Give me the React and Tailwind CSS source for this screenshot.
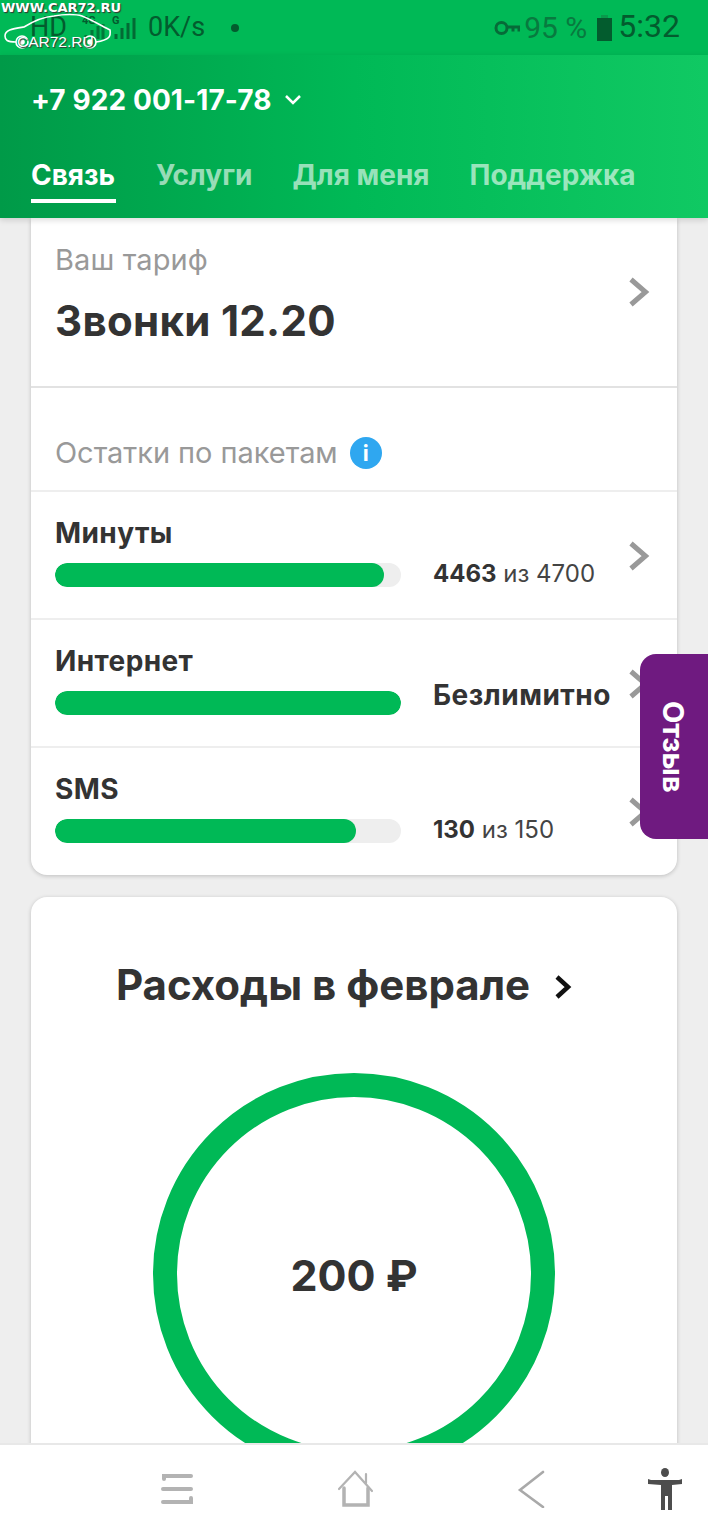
import React from "react";

function Chevron({ className }) {
  return (
    <svg className={className} width="24" height="32" viewBox="0 0 24 32" fill="none">
      <path d="M4 3.5 L18.5 16 L4 28.5" stroke="#999999" strokeWidth="5" />
    </svg>
  );
}

function PackageRow({ title, fill, value, rest, big }) {
  return (
    <div className="relative h-[128px] border-t-2 border-[#eeeeee] pl-6 pr-6 pt-[23px]">
      <div className="text-[28px] leading-[36px] tracking-[0.4px] font-bold text-[#333333]">{title}</div>
      <div className="flex items-start mt-[12px]">
        <div className="w-[346px] h-6 rounded-full bg-[#eeeeee] overflow-hidden">
          <div className={`h-6 rounded-full bg-[#00b956] ${fill}`} />
        </div>
        {big ? (
          <div className="ml-8 -mt-[14px] text-[28px] leading-[36px] tracking-[0.5px] font-bold text-[#333333]">{value}</div>
        ) : (
          <div className="ml-8 text-[24px] leading-[24px] -mt-[1px] text-[#333333]">
            <span className="font-bold">{value}</span> <span className="text-[#444444]">{rest}</span>
          </div>
        )}
      </div>
      <Chevron className="absolute left-[596px] top-[48px]" />
    </div>
  );
}

export default function App() {
  return (
    <div className="relative w-[708px] h-[1536px] overflow-hidden flex flex-col bg-[#eeeeee] font-['Inter','Liberation_Sans',sans-serif]">
      {/* status bar */}
      <div className="h-[55px] shrink-0 bg-[#00b956] flex items-center justify-between pl-[30px] pr-[28px] text-[#035c2e] font-['Roboto',sans-serif]">
        <div className="flex items-center text-[27px]">
          <span className="w-[48px]">HD</span>
          <svg width="70" height="40" viewBox="0 0 70 40" fill="none" stroke="#035c2e" strokeWidth="3">
            <path d="M8 31v-4M14 31v-9M20 31v-13M25 31v-15" opacity="0.7" />
            <path d="M38 31v-5M44 31v-11M50 31v-16M56 31v-21" opacity="0.85" />
            <text x="4" y="16" fontSize="11" fontWeight="700" fill="#035c2e" stroke="none">4G</text>
            <text x="34" y="16" fontSize="11" fontWeight="700" fill="#035c2e" stroke="none">G</text>
          </svg>
          <span>0K/s</span>
          <span className="ml-[26px] w-2 h-2 rounded-full bg-[#035c2e]" />
        </div>
        <div className="flex items-center">
          <svg width="26" height="16" viewBox="0 0 26 16" fill="none" stroke="#066b38" strokeWidth="3">
            <circle cx="7.5" cy="8" r="5.5" />
            <path d="M13 7h12v4.5M19 7v4.5" />
          </svg>
          <span className="ml-[4px] text-[30px] text-[#087a3f]">95 %</span>
          <svg className="ml-[10px]" width="15" height="26" viewBox="0 0 15 26">
            <rect x="4" y="0" width="7" height="3" fill="#0a9a4c" />
            <rect x="0" y="3" width="15" height="23" fill="#035c2e" />
          </svg>
          <span className="ml-[6px] -mt-[3px] text-[32px]">5:32</span>
        </div>
      </div>

      {/* header */}
      <div className="h-[163px] shrink-0 relative z-10 bg-gradient-to-r from-[#009a48] via-[#00b956] to-[#10c963] shadow-[0_2px_6px_rgba(0,0,0,0.15)] pl-[31px] pt-[25px]">
        <div className="flex items-center text-white text-[28px] leading-[40px] tracking-[0.1px] font-bold">
          +7 922 001-17-78
          <svg className="ml-3" width="18" height="12" viewBox="0 0 18 12" fill="none" stroke="white" strokeWidth="2.5">
            <path d="M2 2l7 7 7-7" />
          </svg>
        </div>
        <div className="flex mt-[35px] text-[28px] leading-[40px] font-bold gap-[40px]">
          <div className="text-white border-b-4 border-white h-[48px] w-[85px]">Связь</div>
          <div className="text-white/60">Услуги</div>
          <div className="text-white/60">Для меня</div>
          <div className="text-white/60">Поддержка</div>
        </div>
      </div>

      {/* content */}
      <div className="flex-1 min-h-0 overflow-hidden px-[31px]">
        <div className="w-[646px] h-[657px] bg-white rounded-b-2xl shadow-[0_1px_4px_rgba(0,0,0,0.2)]">
          <div className="relative h-[170px] border-b-2 border-[#e2e2e2] pl-6 pt-[24px]">
            <div className="text-[29px] leading-[36px] tracking-[0.1px] text-[#999999]">Ваш тариф</div>
            <div className="mt-[16px] text-[42px] leading-[54px] tracking-[0.3px] font-bold text-[#333333]">Звонки 12.20</div>
            <Chevron className="absolute left-[596px] top-[58px]" />
          </div>
          <div className="h-[102px] flex items-center pl-6 pt-[28px] text-[29px] tracking-[-0.05px] text-[#999999]">
            Остатки по пакетам
            <span className="ml-3 w-8 h-8 rounded-full bg-[#2fa7f0] flex items-center justify-center text-white text-[22px] font-bold">i</span>
          </div>
          <PackageRow title="Минуты" fill="w-[329px]" value="4463" rest="из 4700" />
          <PackageRow title="Интернет" fill="w-full" value="Безлимитно" big />
          <PackageRow title="SMS" fill="w-[301px]" value="130" rest="из 150" />
        </div>

        <div className="mt-[22px] w-[646px] h-[700px] bg-white rounded-2xl shadow-[0_1px_4px_rgba(0,0,0,0.2)] pt-[60px]">
          <div className="flex items-center justify-center pr-[20px] text-[42px] leading-[56px] font-bold text-[#333333]">
            Расходы в феврале
            <svg className="ml-[24px] mt-1" width="18" height="26" viewBox="0 0 18 26" fill="none" stroke="#111111" strokeWidth="4.5">
              <path d="M3 3l11 10L3 23" />
            </svg>
          </div>
          <div className="mt-[60px] mx-auto w-[402px] h-[402px] rounded-full border-[24px] border-[#00b956] flex items-center justify-center pt-[3px] text-[43px] font-bold text-[#333333]">
            200 ₽
          </div>
        </div>
      </div>

      {/* bottom nav */}
      <div className="h-[93px] shrink-0 relative z-10 bg-white border-t-2 border-[#e8e8e8] flex items-center pb-[3px]">
        <svg className="ml-[160px]" width="34" height="34" viewBox="0 0 34 34" fill="none" stroke="#b3b3b3" strokeWidth="4" strokeLinecap="round">
          <path d="M4 7V4h27M3 17h28M3 30h28v-4" />
        </svg>
        <svg className="ml-[143px]" width="38" height="38" viewBox="0 0 38 38" fill="none" stroke="#b3b3b3" strokeWidth="3" strokeLinecap="round">
          <path d="M2 19L18 2l17 19M29 4v9" strokeWidth="2.2" />
          <path d="M7 18v17h24V18" strokeWidth="3.5" />
        </svg>
        <svg className="ml-[142px]" width="30" height="38" viewBox="0 0 30 38" fill="none" stroke="#a9a9a9" strokeWidth="2.6" strokeLinecap="round">
          <path d="M26 2L3 20l23 17" />
        </svg>
        <svg className="ml-[100px]" width="38" height="42" viewBox="0 0 38 42" fill="#4d4d4d">
          <ellipse cx="18" cy="4.5" rx="4" ry="4.5" />
          <path d="M1 11l3 1h28l3-1v5l-10 1v25h-4V28h-3v14h-4V17L1 16z" />
        </svg>
      </div>

      {/* feedback tab */}
      <div className="absolute z-20 left-[640px] top-[654px] w-[68px] h-[185px] rounded-l-2xl bg-[#6f1a80] flex items-center justify-center pr-[2px]">
        <span className="[writing-mode:vertical-rl] text-white text-[29px] leading-[34px] font-bold">Отзыв</span>
      </div>

      {/* watermark */}
      <div className="absolute z-30 left-0 top-0 w-[130px] h-[54px]">
        <div className="absolute left-[1px] top-[1px] font-['DejaVu_Sans',sans-serif] text-[13px] leading-[14px] font-bold text-white whitespace-nowrap [text-shadow:1px_1px_1px_#333]">WWW.CAR72.RU</div>
        <svg className="absolute left-[4px] top-[12px]" width="108" height="38" viewBox="0 0 108 38" fill="none" stroke="white" strokeWidth="1.6">
          <path d="M12 30C3 30 1 28 1 24 1 18 8 17 20 15 28 10 38 5 50 4 60 2 72 2 78 4 88 8 98 14 106 18 107 24 106 28 92 30" />
          <circle cx="18" cy="30" r="6" />
          <circle cx="86" cy="30" r="6" />
          <circle cx="18" cy="30" r="2" fill="white" />
          <circle cx="86" cy="30" r="2" fill="white" />
        </svg>
        <div className="absolute left-[17px] top-[33px] font-['Liberation_Sans',sans-serif] text-[15.5px] leading-[18px] text-white whitespace-nowrap [text-shadow:1px_1px_1px_#333]">CAR72.RU</div>
      </div>
    </div>
  );
}
